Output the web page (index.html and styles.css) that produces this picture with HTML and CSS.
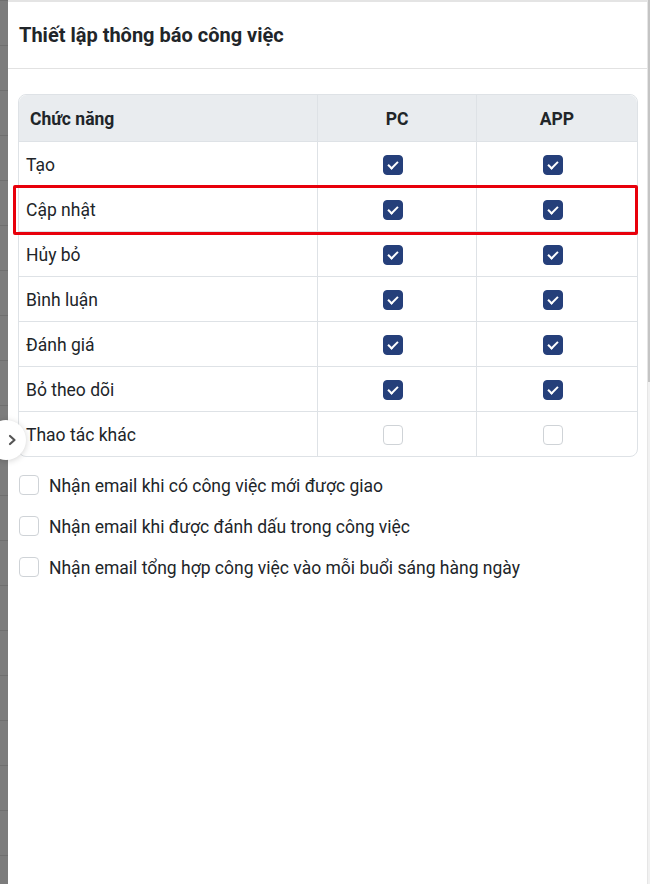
FILE: index.html
```html
<!DOCTYPE html>
<html lang="vi">
<head>
  <meta charset="UTF-8" />
  <meta name="viewport" content="width=device-width, initial-scale=1.0">
  <title>Thiết lập thông báo công việc</title>
  <link rel="stylesheet" href="styles.css">
</head>
<body>
  <div class="screen">
    <div class="backdrop"></div>

    <div class="drawer">
      <!-- Collapse handle -->
      <button class="toggle" aria-label="Đóng">
        <svg width="10" height="12" viewBox="0 0 10 12">
          <path d="M3 2 L7.5 6 L3 10" fill="none" stroke="#555" stroke-width="2.2" stroke-linecap="round" stroke-linejoin="round"/>
        </svg>
      </button>

      <div class="drawer-header">
        <h1>Thiết lập thông báo công việc</h1>
      </div>

      <div class="drawer-body">
        <div class="table-wrap">
          <table class="notify-table">
            <thead>
              <tr>
                <th class="col-name">Chức năng</th>
                <th>PC</th>
                <th>APP</th>
              </tr>
            </thead>
            <tbody>
              <tr>
                <td class="col-name">Tạo</td>
                <td><span class="check on"></span></td>
                <td><span class="check on"></span></td>
              </tr>
              <tr>
                <td class="col-name">Cập nhật</td>
                <td><span class="check on"></span></td>
                <td><span class="check on"></span></td>
              </tr>
              <tr>
                <td class="col-name">Hủy bỏ</td>
                <td><span class="check on"></span></td>
                <td><span class="check on"></span></td>
              </tr>
              <tr>
                <td class="col-name">Bình luận</td>
                <td><span class="check on"></span></td>
                <td><span class="check on"></span></td>
              </tr>
              <tr>
                <td class="col-name">Đánh giá</td>
                <td><span class="check on"></span></td>
                <td><span class="check on"></span></td>
              </tr>
              <tr>
                <td class="col-name">Bỏ theo dõi</td>
                <td><span class="check on"></span></td>
                <td><span class="check on"></span></td>
              </tr>
              <tr>
                <td class="col-name">Thao tác khác</td>
                <td><span class="check"></span></td>
                <td><span class="check"></span></td>
              </tr>
            </tbody>
          </table>
          <!-- highlight around the "Cập nhật" row -->
          <div class="mark"></div>
        </div>

        <div class="options">
          <label class="option"><span class="check"></span><span class="option-text">Nhận email khi có công việc mới được giao</span></label>
          <label class="option"><span class="check"></span><span class="option-text">Nhận email khi được đánh dấu trong công việc</span></label>
          <label class="option"><span class="check"></span><span class="option-text">Nhận email tổng hợp công việc vào mỗi buổi sáng hàng ngày</span></label>
        </div>
      </div>
    </div>

    <div class="scrollbar"><div class="thumb"></div></div>
  </div>
</body>
</html>
```

FILE: styles.css
```css
body {
  margin: 0;
  font-family: Roboto, 'Liberation Sans', sans-serif;
  color: #212529;
  background: #fff;
}
.screen {
  display: flex;
  height: 884px;
  overflow: hidden;
}
.backdrop {
  width: 8px;
  flex-shrink: 0;
  background: repeating-linear-gradient(to bottom, #6f6f6f 0, #6f6f6f 1px, #7c7c7c 1px, #7c7c7c 45px);
}
.drawer {
  flex: 1;
  position: relative;
  background: #fff;
  border-top: 2px solid #e4e4e4;
}
.toggle {
  position: absolute;
  left: -22px;
  top: 418px;
  width: 40px;
  height: 40px;
  border-radius: 50%;
  border: none;
  background: #fff;
  box-shadow: 0 1px 6px rgba(0, 0, 0, 0.18);
  display: flex;
  align-items: center;
  justify-content: flex-end;
  padding: 0 9px 0 0;
  z-index: 2;
}
.drawer-header {
  height: 66px;
  padding: 0 11px;
  display: flex;
  align-items: center;
  border-bottom: 1px solid #e2e2e2;
}
.drawer-header h1 {
  margin: 0;
  font-size: 20px;
  font-weight: 700;
  color: #212529;
}
.drawer-body {
  padding: 25px 9px 0 10px;
}
.table-wrap {
  position: relative;
}
.notify-table {
  width: 620px;
  border-collapse: separate;
  border-spacing: 0;
  border: 1px solid #dee2e6;
  border-radius: 8px;
  font-size: 17.5px;
}
.notify-table th,
.notify-table td {
  border-right: 1px solid #dee2e6;
  border-bottom: 1px solid #dee2e6;
  text-align: center;
  padding: 0;
}
.notify-table th:last-child,
.notify-table td:last-child {
  border-right: none;
}
.notify-table tbody tr:last-child td {
  border-bottom: none;
}
.notify-table th {
  height: 44px;
  padding-top: 2px;
  background: #e9ecef;
  font-weight: 700;
  color: #212529;
}
.notify-table th:first-child {
  border-top-left-radius: 8px;
}
.notify-table th:last-child {
  border-top-right-radius: 8px;
}
.notify-table td {
  height: 44px;
}
.notify-table th.col-name {
  width: 287px;
  text-align: left;
  padding-left: 11px;
}
.notify-table td.col-name {
  height: 42px;
  text-align: left;
  padding: 2px 0 0 7px;
}
.notify-table th:nth-child(2) {
  width: 158px;
}
.notify-table td .check {
  margin-right: 9px;
  vertical-align: middle;
}
.check {
  display: inline-block;
  width: 18px;
  height: 18px;
  border: 1px solid #cfd3d7;
  border-radius: 4px;
  background: #fff;
  box-sizing: content-box;
  position: relative;
  flex-shrink: 0;
}
.check.on {
  background: #253f7a;
  border-color: #253f7a;
}
.check.on::after {
  content: '';
  position: absolute;
  left: 6px;
  top: 3px;
  width: 4px;
  height: 8px;
  border: solid #fff;
  border-width: 0 2px 2px 0;
  transform: rotate(45deg);
}
.mark {
  position: absolute;
  left: -5px;
  top: 91px;
  width: 619px;
  height: 44px;
  border: 3px solid #e8000b;
  border-radius: 2px;
}
.options {
  padding: 18px 0 0 1px;
  display: flex;
  flex-direction: column;
  gap: 21px;
}
.option {
  display: flex;
  align-items: center;
  gap: 10px;
  font-size: 17.5px;
  height: 20px;
  color: #212529;
}
.option-text {
  padding-top: 2px;
}
.scrollbar {
  width: 4px;
  flex-shrink: 0;
  background: #f1f1f1;
  border-left: 1px solid #e6e6e6;
}
.thumb {
  height: 382px;
  background: #c4c4c4;
}
```
